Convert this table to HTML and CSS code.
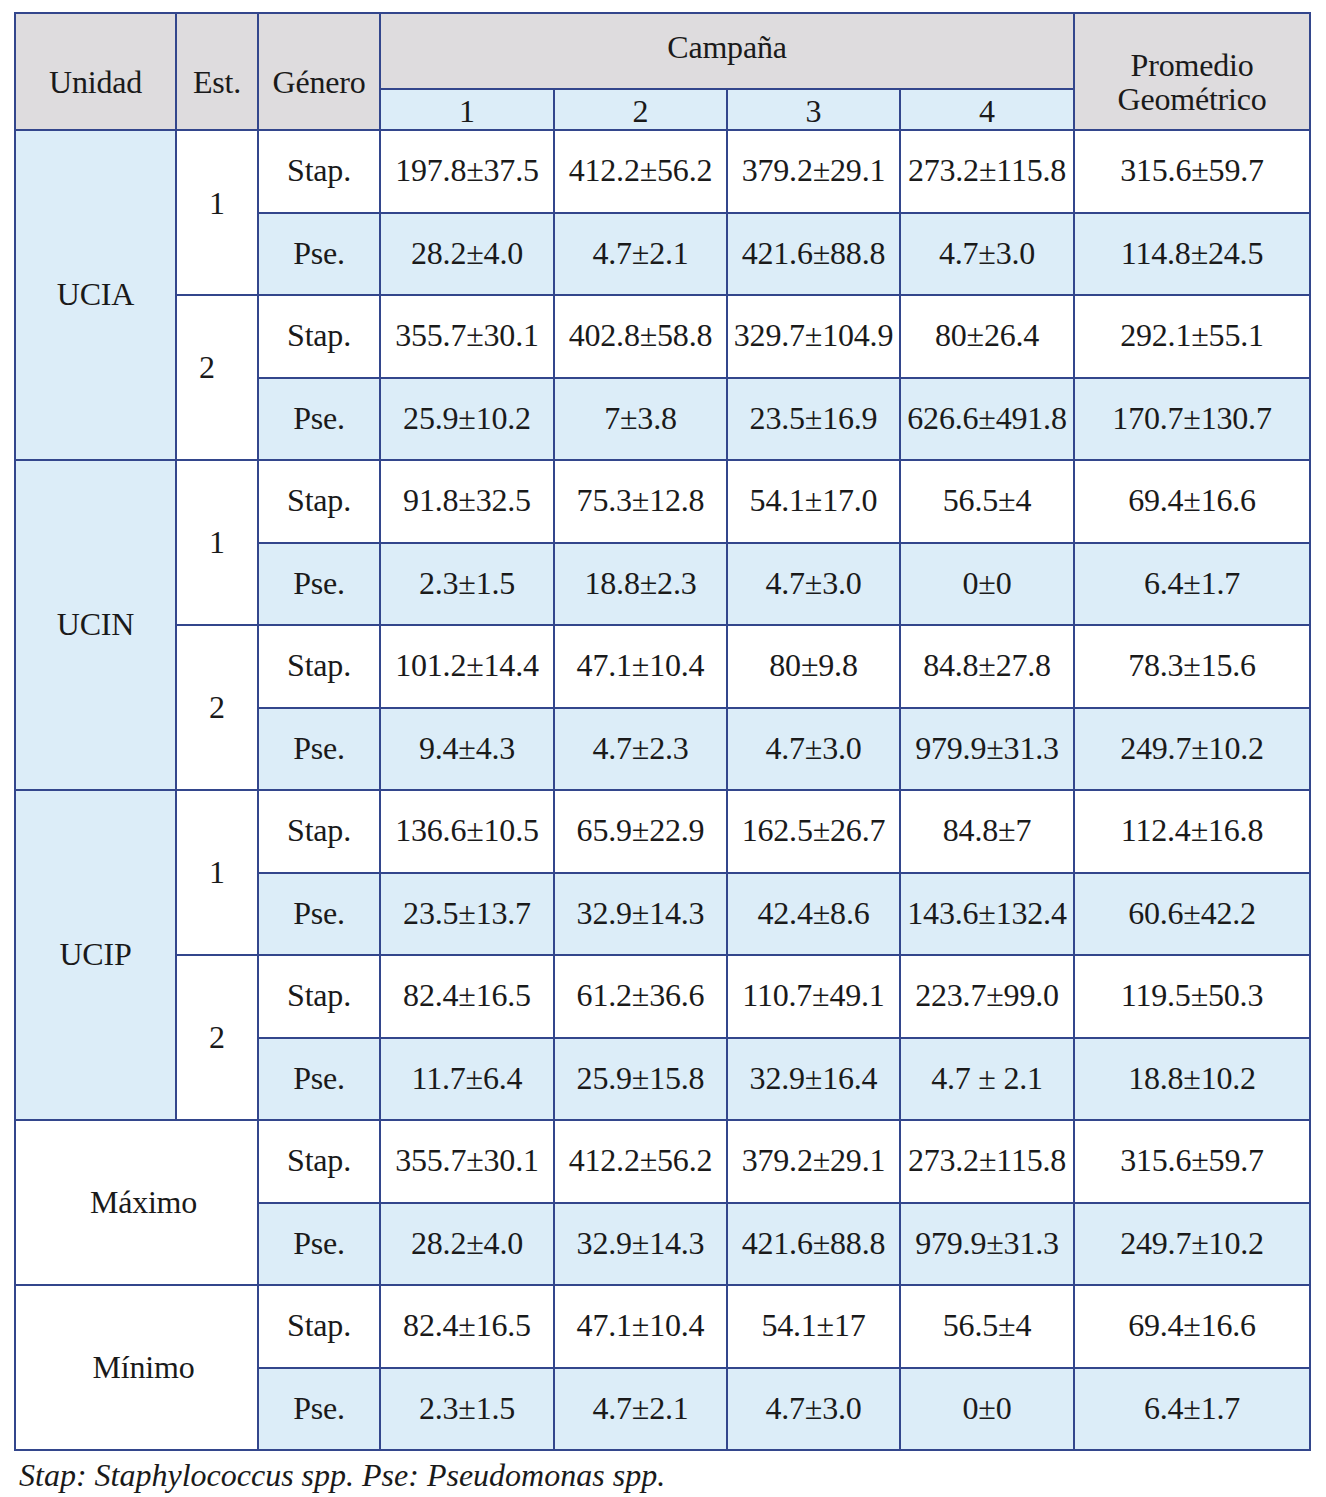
FILE: index.html
```html
<!DOCTYPE html>
<html lang="es">
<head>
<meta charset="utf-8">
<title>Tabla</title>
<link rel="stylesheet" href="styles.css">
</head>
<body>
<div class="wrap">
<table class="tbl">
<colgroup>
<col class="c-uni"><col class="c-est"><col class="c-gen">
<col class="c-n1"><col class="c-n2"><col class="c-n3"><col class="c-n4"><col class="c-pro">
</colgroup>
<thead>
<tr class="h1">
<th rowspan="2" class="gray hd">Unidad</th>
<th rowspan="2" class="gray hd">Est.</th>
<th rowspan="2" class="gray hd">Género</th>
<th colspan="4" class="gray camp">Campaña</th>
<th rowspan="2" class="gray hd prom">Promedio<br>Geométrico</th>
</tr>
<tr class="h2">
<th class="blue sub">1</th><th class="blue sub">2</th><th class="blue sub">3</th><th class="blue sub">4</th>
</tr>
</thead>
<tbody>
<tr><td rowspan="4" class="blue">UCIA</td><td rowspan="2" class="white est est-up">1</td><td class="white">Stap.</td><td>197.8±37.5</td><td>412.2±56.2</td><td>379.2±29.1</td><td>273.2±115.8</td><td>315.6±59.7</td></tr>
<tr class="pse"><td>Pse.</td><td>28.2±4.0</td><td>4.7±2.1</td><td>421.6±88.8</td><td>4.7±3.0</td><td>114.8±24.5</td></tr>
<tr><td rowspan="2" class="white est est-l">2</td><td>Stap.</td><td>355.7±30.1</td><td>402.8±58.8</td><td>329.7±104.9</td><td>80±26.4</td><td>292.1±55.1</td></tr>
<tr class="pse"><td>Pse.</td><td>25.9±10.2</td><td>7±3.8</td><td>23.5±16.9</td><td>626.6±491.8</td><td>170.7±130.7</td></tr>

<tr><td rowspan="4" class="blue">UCIN</td><td rowspan="2" class="white est">1</td><td>Stap.</td><td>91.8±32.5</td><td>75.3±12.8</td><td>54.1±17.0</td><td>56.5±4</td><td>69.4±16.6</td></tr>
<tr class="pse"><td>Pse.</td><td>2.3±1.5</td><td>18.8±2.3</td><td>4.7±3.0</td><td>0±0</td><td>6.4±1.7</td></tr>
<tr><td rowspan="2" class="white est">2</td><td>Stap.</td><td>101.2±14.4</td><td>47.1±10.4</td><td>80±9.8</td><td>84.8±27.8</td><td>78.3±15.6</td></tr>
<tr class="pse"><td>Pse.</td><td>9.4±4.3</td><td>4.7±2.3</td><td>4.7±3.0</td><td>979.9±31.3</td><td>249.7±10.2</td></tr>

<tr><td rowspan="4" class="blue">UCIP</td><td rowspan="2" class="white est">1</td><td>Stap.</td><td>136.6±10.5</td><td>65.9±22.9</td><td>162.5±26.7</td><td>84.8±7</td><td>112.4±16.8</td></tr>
<tr class="pse"><td>Pse.</td><td>23.5±13.7</td><td>32.9±14.3</td><td>42.4±8.6</td><td>143.6±132.4</td><td>60.6±42.2</td></tr>
<tr><td rowspan="2" class="white est">2</td><td>Stap.</td><td>82.4±16.5</td><td>61.2±36.6</td><td>110.7±49.1</td><td>223.7±99.0</td><td>119.5±50.3</td></tr>
<tr class="pse"><td>Pse.</td><td>11.7±6.4</td><td>25.9±15.8</td><td>32.9±16.4</td><td>4.7 ± 2.1</td><td>18.8±10.2</td></tr>

<tr><td rowspan="2" colspan="2" class="white ext">Máximo</td><td>Stap.</td><td>355.7±30.1</td><td>412.2±56.2</td><td>379.2±29.1</td><td>273.2±115.8</td><td>315.6±59.7</td></tr>
<tr class="pse"><td>Pse.</td><td>28.2±4.0</td><td>32.9±14.3</td><td>421.6±88.8</td><td>979.9±31.3</td><td>249.7±10.2</td></tr>

<tr><td rowspan="2" colspan="2" class="white ext">Mínimo</td><td>Stap.</td><td>82.4±16.5</td><td>47.1±10.4</td><td>54.1±17</td><td>56.5±4</td><td>69.4±16.6</td></tr>
<tr class="pse"><td>Pse.</td><td>2.3±1.5</td><td>4.7±2.1</td><td>4.7±3.0</td><td>0±0</td><td>6.4±1.7</td></tr>
</tbody>
</table>
<p class="note">Stap: Staphylococcus spp. Pse: Pseudomonas spp.</p>
</div>
</body>
</html>
```

FILE: styles.css
```css
html, body {
  margin: 0;
  padding: 0;
  background: #ffffff;
}

body {
  font-family: "Liberation Serif", "Times New Roman", serif;
  color: #1a1a1a;
}

.wrap {
  padding: 12px 0 0 14px;
}

.tbl {
  border-collapse: collapse;
  table-layout: fixed;
  width: 1296px;
  font-size: 32px;
}

.c-uni { width: 161px; }
.c-est { width: 82px; }
.c-gen { width: 122px; }
.c-n1 { width: 174px; }
.c-n2 { width: 173px; }
.c-n3 { width: 173px; }
.c-n4 { width: 174px; }
.c-pro { width: 236px; }

.tbl th,
.tbl td {
  border: 2px solid #33468c;
  padding: 0;
  text-align: center;
  vertical-align: middle;
  font-weight: normal;
  white-space: nowrap;
  line-height: 1.05;
  letter-spacing: -0.2px;
}

.gray { background: #dedcde; }
.blue { background: #dcedf8; }
.white { background: #ffffff; }

.h1 { height: 76px; }
.h2 { height: 41px; }

.hd {
  padding-top: 22px !important;
}

.camp {
  padding-bottom: 6px !important;
}

.sub {
  line-height: 1;
  padding-top: 4px !important;
}

.prom {
  line-height: 1.08;
}

.tbl tbody tr { height: 82.5px; }

.tbl tbody tr.pse td {
  background: #dcedf8;
}

.est-up {
  padding-bottom: 18px !important;
}

.est-l {
  padding-right: 20px !important;
  padding-bottom: 20px !important;
}

.ext {
  padding-left: 14px !important;
}

.note {
  margin: 4px 0 0 5px;
  font-style: italic;
  font-size: 32px;
  line-height: 40px;
}
```
